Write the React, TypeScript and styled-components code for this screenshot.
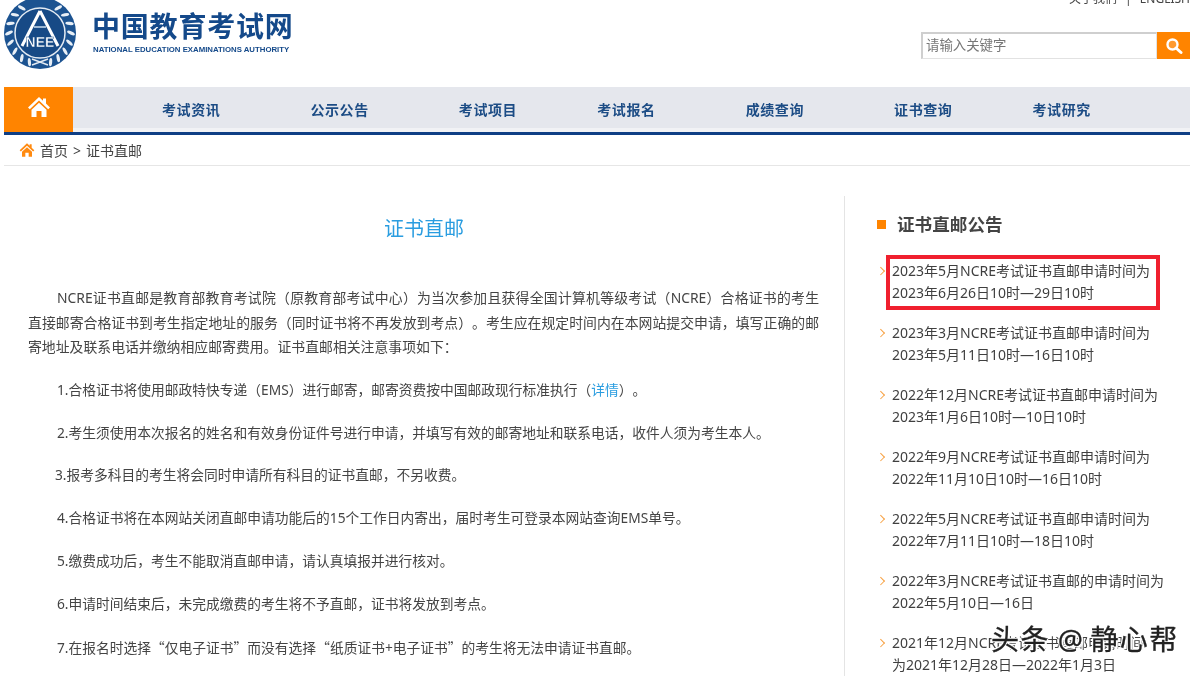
import React from "react";
import styled, { createGlobalStyle } from "styled-components";

const Global = createGlobalStyle`
  html, body { margin: 0; padding: 0; background: #fff; }
  body { width: 1200px; height: 676px; overflow: hidden; font-family: "Noto Sans", "Noto Sans CJK SC", sans-serif; color: #333; text-spacing-trim: space-all; }
  *, *::before, *::after { box-sizing: border-box; }
`;

const Page = styled.div`
  position: relative;
  width: 1200px;
  height: 676px;
  overflow: hidden;
  padding-left: 4px;
  filter: blur(0.35px);
`;

const Header = styled.header`
  width: 1186px;
  height: 87px;
  display: flex;
  justify-content: space-between;
`;

const Brand = styled.div`
  display: flex;
  align-items: flex-start;
  gap: 14px;
`;

const BrandText = styled.div`
  display: flex;
  flex-direction: column;
  color: #14498a;
`;

const BrandName = styled.div`
  font-size: 28px;
  line-height: 32px;
  margin-top: 10px;
  font-weight: 700;
  letter-spacing: 0.8px;
  white-space: nowrap;
`;

const BrandEn = styled.div`
  font-family: "Liberation Sans", sans-serif;
  font-size: 7.8px;
  line-height: 10px;
  margin: 3px 0 0 1px;
  font-weight: 700;
  white-space: nowrap;
`;

const HeaderRight = styled.div`
  display: flex;
  flex-direction: column;
  align-items: flex-end;
`;

const TopLinks = styled.div`
  font-size: 12px;
  line-height: 16px;
  margin-top: -9px;
  color: #444;
  display: flex;
  gap: 8px;
  white-space: nowrap;
`;

const Search = styled.div`
  margin-top: 25px;
  width: 269px;
  height: 27px;
  display: flex;
`;

const SearchBox = styled.div`
  flex: 1;
  border: 1px solid #e2e2e2;
  border-top: 2px solid #cfcfcf;
  border-left: 2px solid #cfcfcf;
  font-size: 13.4px;
  line-height: 23px;
  padding-left: 3px;
  color: #777;
`;

const SearchButton = styled.div`
  width: 33px;
  background: #ff8400;
  display: flex;
  align-items: center;
  justify-content: center;
`;

const Nav = styled.nav`
  width: 1186px;
  height: 48px;
  background: #e5e7ed;
  border-bottom: 3px solid #0f3f85;
  display: flex;
  box-shadow: inset 0 -4px 0 #f1f2f5;
`;

const HomeTab = styled.div`
  width: 69px;
  height: 45px;
  background: #ff8400;
  display: flex;
  justify-content: center;
  padding-top: 8px;
`;

const NavList = styled.div`
  display: flex;
  padding-left: 89px;
`;

const NavItem = styled.div<{ $gap: number }>`
  font-size: 14px;
  font-weight: 700;
  letter-spacing: 0.6px;
  line-height: 20px;
  padding-top: 13px;
  color: #1c4c85;
  margin-right: ${(p) => p.$gap}px;
  white-space: nowrap;
`;

const Crumbs = styled.div`
  width: 1186px;
  height: 31px;
  border-bottom: 1px solid #e6e6e6;
  display: flex;
  align-items: center;
  padding: 0 0 0 15px;
  font-size: 14px;
  color: #444;
  gap: 5px;
`;

const CrumbSep = styled.span`
  margin: 0 5px;
`;

const Body = styled.div`
  display: flex;
  width: 1196px;
  padding-top: 30px;
`;

const Main = styled.main`
  width: 840px;
  padding: 18px 25px 0 24px;
  flex-shrink: 0;
`;

const Title = styled.h1`
  margin: 0 0 42px;
  text-align: center;
  font-size: 20px;
  line-height: 30px;
  font-weight: 400;
  color: #2a9de0;
  padding-left: 1px;
`;

const Para = styled.p<{ $shift?: number; $size?: number }>`
  margin: 0 0 18.3px;
  font-size: ${(p) => p.$size ?? 13.75}px;
  line-height: 24.5px;
  text-indent: ${(p) => 29 + (p.$shift ?? 0)}px;
  text-align: justify;
  color: #444;
`;

const Link = styled.span`
  color: #2a9de0;
`;

const Quote = styled.span`
  font-family: "Noto Sans CJK SC", sans-serif;
`;

const Side = styled.aside`
  flex: 1;
  border-left: 1px solid #e4e4e4;
  padding: 13px 0 0 32px;
  height: 500px;
`;

const SideTitle = styled.h2`
  margin: 0 0 21px;
  display: flex;
  align-items: center;
  gap: 11px;
  font-size: 17.6px;
  line-height: 30px;
  font-weight: 700;
  color: #444;
  &::before {
    content: "";
    width: 9px;
    height: 9px;
    background: #ff8400;
  }
`;

const Notices = styled.ul`
  list-style: none;
  margin: 0;
  padding: 0;
`;

const Notice = styled.li<{ $hot?: boolean }>`
  position: relative;
  width: 288px;
  padding-left: 15px;
  margin-bottom: 18px;
  font-size: 14px;
  line-height: 22px;
  color: #3f3f3f;
  &::before {
    content: "";
    position: absolute;
    left: 1px;
    top: 8px;
    width: 5.5px;
    height: 5.5px;
    border-top: 1px solid #f7a040;
    border-right: 1px solid #f7a040;
    transform: rotate(45deg);
  }
  &::after {
    content: "";
    display: ${(p) => (p.$hot ? "block" : "none")};
    position: absolute;
    left: 9px;
    top: -5px;
    width: 274px;
    height: 55px;
    border: 4px solid #f0202e;
  }
`;

const Watermark = styled.div`
  position: absolute;
  left: 991px;
  top: 621px;
  font-size: 28px;
  line-height: 36px;
  letter-spacing: 1.4px;
  color: #222;
  white-space: nowrap;
  -webkit-text-stroke: 0.3px #222;
  text-shadow: 1px 1px 0 #fff, -1px -1px 0 #fff, 1px -1px 0 #fff, -1px 1px 0 #fff, 2px 2px 1px #fff;
`;

const WatermarkAt = styled.span`
  margin: 0 6px 0 8px;
`;

const leafAngles = [36, 54, 72, 90, 108, 126, 144, 160];

const Emblem = () => (
  <svg width="74" height="72" viewBox="0 0 74 72" style={{ marginTop: -3 }}>
    <circle cx="36" cy="36" r="36" fill="#1c5391" />
    <circle cx="36" cy="36" r="25" fill="#174a86" stroke="#e4ebf3" strokeWidth="1.5" />
    <path d="M36 14 L18 49 M36 14 L54 49" stroke="#fff" strokeWidth="3" fill="none" />
    <path d="M30 30 H42" stroke="#9db8d4" strokeWidth="2" />
    <text x="36" y="50" textAnchor="middle" fontFamily="Liberation Sans" fontWeight="700" fontSize="14" fill="#fff" stroke="#174a86" strokeWidth="0.4">NEE</text>
    <path d="M28 68 L44 62 M44 68 L28 62" stroke="#e4ebf3" strokeWidth="1.4" fill="none" />
    {[-1, 1].flatMap((side) =>
      leafAngles.map((a) => {
        const rad = (a * Math.PI) / 180;
        const x = 36 + side * 31 * Math.sin(rad);
        const y = 36 - 31 * Math.cos(rad);
        return (
          <ellipse
            key={`${side}-${a}`}
            cx={x}
            cy={y}
            rx="1.6"
            ry="4.2"
            fill="#e8eff6"
            transform={`rotate(${side * (a + 25)} ${x} ${y})`}
          />
        );
      })
    )}
  </svg>
);

const HomeIcon = ({ size, color }: { size: number; color: string }) => (
  <svg width={size} height={size} viewBox="0 0 24 24" fill={color}>
    <path d="M12 2 L1 12.4 L2.8 14.2 L12 5.6 L21.2 14.2 L23 12.4 L19 8.6 V3.5 H16 V5.8 Z" />
    <path d="M4.5 14.8 L12 7.8 L19.5 14.8 V22 H14.5 V16 H9.5 V22 H4.5 Z" />
  </svg>
);

const navItems: [string, number][] = [
  ["考试资讯", 90], ["公示公告", 90], ["考试项目", 80], ["考试报名", 90],
  ["成绩查询", 90], ["证书查询", 80], ["考试研究", 0],
];

const notices = [
  ["2023年5月NCRE考试证书直邮申请时间为", "2023年6月26日10时—29日10时"],
  ["2023年3月NCRE考试证书直邮申请时间为", "2023年5月11日10时—16日10时"],
  ["2022年12月NCRE考试证书直邮申请时间为", "2023年1月6日10时—10日10时"],
  ["2022年9月NCRE考试证书直邮申请时间为", "2022年11月10日10时—16日10时"],
  ["2022年5月NCRE考试证书直邮申请时间为", "2022年7月11日10时—18日10时"],
  ["2022年3月NCRE考试证书直邮的申请时间为", "2022年5月10日—16日"],
  ["2021年12月NCRE考试证书直邮申请时间", "为2021年12月28日—2022年1月3日"],
];

export default function App() {
  return (
    <Page>
      <Global />
      <Header>
        <Brand>
          <Emblem />
          <BrandText>
            <BrandName>中国教育考试网</BrandName>
            <BrandEn>NATIONAL EDUCATION EXAMINATIONS AUTHORITY</BrandEn>
          </BrandText>
        </Brand>
        <HeaderRight>
          <TopLinks>
            <span>关于我们</span>
            <span>|</span>
            <span>ENGLISH</span>
          </TopLinks>
          <Search>
            <SearchBox>请输入关键字</SearchBox>
            <SearchButton>
              <svg width="18" height="18" viewBox="0 0 18 18">
                <circle cx="7.5" cy="7.5" r="5" fill="#ff9a30" stroke="#fff" strokeWidth="2.4" />
                <path d="M11 11 L16 15.5" stroke="#fff" strokeWidth="3" strokeLinecap="round" />
              </svg>
            </SearchButton>
          </Search>
        </HeaderRight>
      </Header>
      <Nav>
        <HomeTab>
          <HomeIcon size={24} color="#fff" />
        </HomeTab>
        <NavList>
          {navItems.map(([t, g]) => (
            <NavItem key={t} $gap={g}>{t}</NavItem>
          ))}
        </NavList>
      </Nav>
      <Crumbs>
        <HomeIcon size={16} color="#ff8a10" />
        <span>首页<CrumbSep>&gt;</CrumbSep>证书直邮</span>
      </Crumbs>
      <Body>
        <Main>
          <Title>证书直邮</Title>
          <Para $size={13.87}>NCRE证书直邮是教育部教育考试院（原教育部考试中心）为当次参加且获得全国计算机等级考试（NCRE）合格证书的考生直接邮寄合格证书到考生指定地址的服务（同时证书将不再发放到考点）。考生应在规定时间内在本网站提交申请，填写正确的邮寄地址及联系电话并缴纳相应邮寄费用。证书直邮相关注意事项如下：</Para>
          <Para>1.合格证书将使用邮政特快专递（EMS）进行邮寄，邮寄资费按中国邮政现行标准执行（<Link>详情</Link>）。</Para>
          <Para>2.考生须使用本次报名的姓名和有效身份证件号进行申请，并填写有效的邮寄地址和联系电话，收件人须为考生本人。</Para>
          <Para $shift={-2}>3.报考多科目的考生将会同时申请所有科目的证书直邮，不另收费。</Para>
          <Para>4.合格证书将在本网站关闭直邮申请功能后的15个工作日内寄出，届时考生可登录本网站查询EMS单号。</Para>
          <Para>5.缴费成功后，考生不能取消直邮申请，请认真填报并进行核对。</Para>
          <Para>6.申请时间结束后，未完成缴费的考生将不予直邮，证书将发放到考点。</Para>
          <Para>7.在报名时选择<Quote>“</Quote>仅电子证书<Quote>”</Quote>而没有选择<Quote>“</Quote>纸质证书+电子证书<Quote>”</Quote>的考生将无法申请证书直邮。</Para>
        </Main>
        <Side>
          <SideTitle>证书直邮公告</SideTitle>
          <Notices>
            {notices.map(([a, b], i) => (
              <Notice key={a} $hot={i === 0}>
                {a}
                <br />
                {b}
              </Notice>
            ))}
          </Notices>
        </Side>
      </Body>
      <Watermark>头条<WatermarkAt>@</WatermarkAt>静心帮</Watermark>
    </Page>
  );
}
